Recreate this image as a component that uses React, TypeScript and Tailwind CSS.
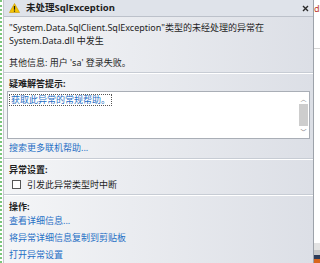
export default function App() {
  const font = { fontFamily: '"Noto Sans", "Noto Sans CJK SC", sans-serif' };
  return (
    <div className="w-[320px] h-[263px] flex bg-white overflow-hidden text-[#1e1e1e]" style={font}>
      {/* 뒤쪽 에디터 가장자리 */}
      <div className="w-[3px] shrink-0 h-full border-l-2 border-dotted border-[#7cc57c]" />

      {/* 예외 도우미 창 */}
      <div className="w-[311px] shrink-0 h-full flex flex-col border-l border-r border-l-[#c3c7ce] border-r-[#9da2aa] bg-gradient-to-r from-[#f4f5f7] to-[#dcdfe6]">
        {/* 제목 표시줄 */}
        <div className="h-[17px] shrink-0 flex items-center pl-[4px] pr-[4px] bg-[#dfe3ea] border-b border-[#bcc1ca]">
          <svg width="11" height="10" viewBox="0 0 11 10" className="ml-[1px]">
            <path d="M5.5 0.5 L10.6 9.5 L0.4 9.5 Z" fill="#f5c400" stroke="#c99a00" strokeWidth="0.6" />
            <rect x="4.9" y="3" width="1.2" height="3.7" fill="#1a1a1a" />
            <rect x="4.9" y="7.5" width="1.2" height="1.2" fill="#1a1a1a" />
          </svg>
          <span className="ml-[6px] text-[9.5px] font-bold leading-none">未处理SqlException</span>
          <svg width="7" height="7" viewBox="0 0 7 7" className="ml-auto">
            <path d="M1 1 L6 6 M6 1 L1 6" stroke="#2a2a2a" strokeWidth="1.4" />
          </svg>
        </div>

        {/* 본문 */}
        <div className="flex flex-col text-[9px] leading-[13px]">
          <div className="px-[5px] pt-[4px]">
            <p>"System.Data.SqlClient.SqlException"类型的未经处理的异常在<br />System.Data.dll 中发生</p>
            <p className="mt-[9px]">其他信息: 用户 'sa' 登录失败。</p>
          </div>

          <div className="mt-[3px] h-[2px] border-t border-[#c7ccd4] border-b border-b-white" />

          <div className="px-[3px] pt-[3px]">
            <p className="pl-[2px] font-bold">疑难解答提示:</p>
            <div className="mt-[1px] h-[48px] flex bg-white border border-[#a9aeb6]">
              <div className="flex-1 pt-[1px] pl-[1px]">
                <span className="inline-block px-[1px] leading-[10px] border border-dotted border-[#555] text-[#1f6fc5]">获取此异常的常规帮助。</span>
              </div>
              <div className="w-[11px] flex flex-col items-center bg-white text-[#707070] text-[6px] leading-none">
                <span className="mt-[4px] h-[6px]">︿</span>
                <div className="mt-[2px] w-[9px] h-[22px] bg-[#cdcdcd]" />
                <span className="mt-[3px] h-[6px]">﹀</span>
              </div>
            </div>
            <p className="pl-[2px] mt-[2px] text-[#1f6fc5]">搜索更多联机帮助...</p>
          </div>

          <div className="mt-[4px] h-[2px] border-t border-[#c7ccd4] border-b border-b-white" />

          <div className="px-[5px] pt-[3px]">
            <p className="font-bold">异常设置:</p>
            <label className="mt-[2px] flex items-center pl-[3px]">
              <span className="w-[9px] h-[9px] border border-[#555] bg-white" />
              <span className="ml-[6px]">引发此异常类型时中断</span>
            </label>
          </div>

          <div className="mt-[3px] h-[2px] border-t border-[#c7ccd4] border-b border-b-white" />

          <div className="px-[5px] pt-[4px] flex flex-col">
            <p className="font-bold">操作:</p>
            <p className="mt-[1px] text-[#1f6fc5]">查看详细信息...</p>
            <p className="mt-[4px] text-[#1f6fc5]">将异常详细信息复制到剪贴板</p>
            <p className="mt-[4px] text-[#1f6fc5]">打开异常设置</p>
          </div>
        </div>
      </div>

      {/* 뒤쪽 창 오른쪽 가장자리 */}
      <div className="w-[6px] shrink-0 h-full flex flex-col bg-white">
        <div className="h-[49px] pt-[3px] text-[9px] leading-[11px] text-[#c0392b] overflow-hidden whitespace-nowrap border-b border-[#d6d6d6]">dl</div>
        <div className="flex-1" />
        <div className="h-[7px] bg-[#e3e3e3]" />
        <div className="h-[5px] bg-[#c9c9c9]" />
        <div className="h-[4px] bg-[#2d3b57]" />
        <div className="h-[4px] bg-[#d9661c]" />
      </div>
    </div>
  );
}
